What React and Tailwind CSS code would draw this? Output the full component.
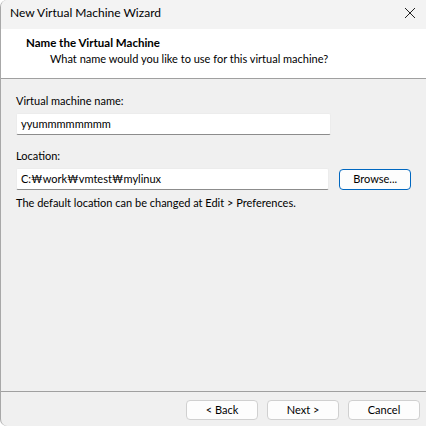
export default function App() {
  const font = { fontFamily: 'Lato, "Noto Sans", sans-serif' };
  return (
    <div
      className="w-[426px] h-[426px] bg-[#f0f0f0] border-l border-[#a8a8a8] rounded-tl-[7px] rounded-bl-[7px] overflow-hidden flex flex-col text-[11px] text-black"
      style={font}
    >
      {/* title bar */}
      <div className="h-[29px] bg-[#f3f3f3] flex items-center justify-between pl-[9px] pr-[8px] pb-[3px] shrink-0 text-[12px]">
        <span>New Virtual Machine Wizard</span>
        <svg width="12" height="12" viewBox="0 0 12 12" className="mr-[2px]">
          <path d="M1 1 L11 11 M11 1 L1 11" stroke="#222" strokeWidth="1" fill="none" />
        </svg>
      </div>

      {/* header */}
      <div className="h-[50px] bg-white border-b border-[#a0a0a0] pl-[25px] pt-[6px] shrink-0">
        <div className="font-bold leading-[16px] text-[11.5px]">Name the Virtual Machine</div>
        <div className="pl-[24px] leading-[16px]">What name would you like to use for this virtual machine?</div>
      </div>

      {/* body */}
      <div className="flex-1 px-[15px] pt-[14px]">
        <div className="leading-[16px]">Virtual machine name:</div>
        <div className="mt-[4px] w-[315px] h-[22px] bg-white border border-[#ececec] border-b-[#8c8c8c] rounded-[2px] flex items-center pl-[4px]">
          yyummmmmmmm
        </div>

        <div className="mt-[13px] leading-[16px]">Location:</div>
        <div className="mt-[4px] flex items-center gap-[10px]">
          <div className="w-[315px] h-[22px] bg-white border border-[#ececec] border-b-[#8c8c8c] rounded-[2px] flex items-center pl-[4px]">
            C:₩work₩vmtest₩mylinux
          </div>
          <div className="w-[72px] h-[21px] bg-[#fdfdfd] border border-[#0067c0] rounded-[4px] flex items-center justify-center">
            Browse...
          </div>
        </div>
        <div className="mt-[5px] leading-[16px]">The default location can be changed at Edit &gt; Preferences.</div>
      </div>

      {/* footer */}
      <div className="h-[35px] border-t border-[#a0a0a0] flex items-start justify-end gap-[9px] pr-[6px] pt-[8px] shrink-0">
        {["< Back", "Next >", "Cancel"].map((t) => (
          <div
            key={t}
            className="w-[72px] h-[20px] bg-[#fdfdfd] border border-[#d0d0d0] rounded-[4px] flex items-center justify-center"
          >
            {t}
          </div>
        ))}
      </div>
    </div>
  );
}
